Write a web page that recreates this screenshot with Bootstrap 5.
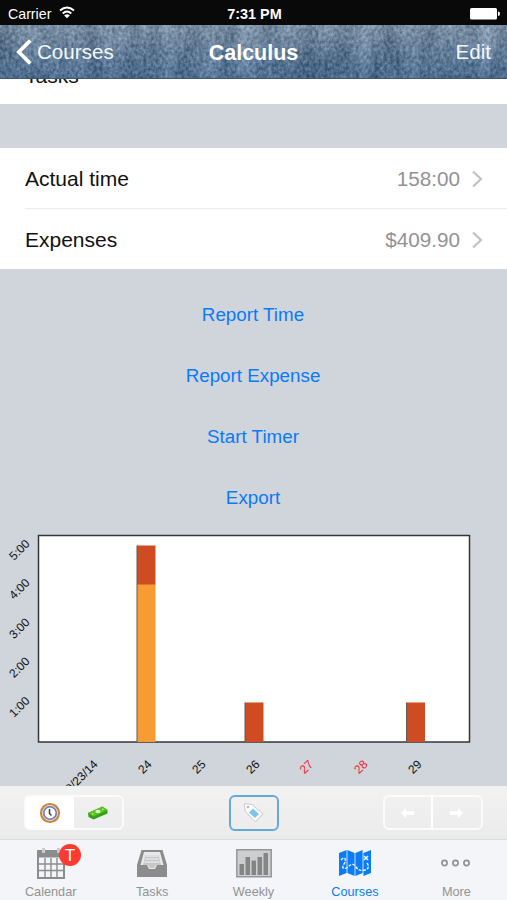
<!DOCTYPE html>
<html lang="en">
<head>
<meta charset="utf-8">
<meta name="viewport" content="width=device-width, initial-scale=1">
<title>Calculus</title>
<link href="https://cdn.jsdelivr.net/npm/bootstrap@5.3.0/dist/css/bootstrap.min.css" rel="stylesheet">
<style>
body{font-family:"Liberation Sans",Arial,sans-serif;background:#d0d4db;height:900px;overflow:hidden;color:#111}
svg{display:block;flex:none}
.status{height:25px;background:#090909;font-size:14.2px;line-height:28px;padding:0 6px 0 8px}
.status strong{font-size:14.4px}
.denim{height:54px;background:#56789b;overflow:hidden;isolation:isolate}
.denim-tex{inset:0;z-index:-1}
.denim .side{font-size:20.6px;flex:1 1 0;color:#f2f7fb;padding-top:1px}
.denim .title{font-size:21.5px;padding-top:2px}
.rows .list-group-item{height:61px;font-size:21px;padding:1px 24px 0 0;margin-left:25px;border-color:#ececee;background:transparent;color:#111}
.rows .list-group-item+.list-group-item{height:60px}
.rows .value{color:#929295;font-size:20.7px}
.tasks-row{height:25px;font-size:21px}
.tasks-row span{margin:-18px 0 0 25px;line-height:30px}
.gap-band{height:44px}
.actions .btn{height:61px;font-size:18.8px;color:#0a7af5;border:0;padding:0 1px 0 0}
.tools{height:54px;background:linear-gradient(#f2f2f2,#ebebeb);padding:0 24px 0 24px;border-bottom:1px solid #dadcde}
.seg{height:35px;border:2px solid #fbfbfb;border-radius:6px}
.seg>div{width:48px}
.tagbtn{width:50px;height:36px;border:2px solid #65a8da;border-radius:6px}
.tabs{height:60px;background:#f3f5f8}
.tabs a{color:#929292;font-size:12.7px;line-height:16px;padding-top:6px}
.tabs a.on{color:#0a7cf8}
.tab-badge{left:59px;top:4px;width:22px;height:22px;border-radius:50%;background:#fd3b30;font-size:17px;line-height:23px}
</style>
<script src="https://cdn.jsdelivr.net/npm/bootstrap@5.3.0/dist/js/bootstrap.bundle.min.js"></script>
</head>
<body class="d-flex flex-column">
<div class="status d-flex text-white flex-shrink-0">
  <div class="d-flex col px-0 align-items-start"><span>Carrier</span>
    <svg class="ms-2 mt-1" width="16" height="16" viewBox="0 0 16 16" fill="none" stroke="#fff" stroke-width="2"><path d="M1 6.600Q8 .4 15 6.600M3.700 9.400Q8 5.600 12.300 9.400"/><path d="M8 14.200 5.200 11.400Q8 9.200 10.800 11.400Z" fill="#fff" stroke="none"/></svg>
  </div>
  <strong>7:31 PM</strong>
  <div class="d-flex col justify-content-end px-0"><svg class="mt-2" width="31" height="12" viewBox="0 0 31 12" fill="#fff"><rect width="27" height="11.500" rx="1.500"/><path d="M28 3.500q2 0 2 2.200t-2 2.200z"/></svg></div>
</div>
<header class="denim position-relative d-flex align-items-center flex-shrink-0 text-white">
  <svg class="denim-tex position-absolute" width="507" height="54" color-interpolation-filters="sRGB">
    <defs>
      <linearGradient id="wash" x2="0" y2="1"><stop offset="0" stop-color="#7f9ab5"/><stop offset=".5" stop-color="#5a7fa5"/><stop offset="1" stop-color="#386494"/></linearGradient>
      <filter id="weave" x="0" y="0" width="100%" height="100%"><feTurbulence type="fractalNoise" baseFrequency=".32 .26" numOctaves="3" seed="4"/><feColorMatrix values="1.5 0 0 0 -.3  1.5 0 0 0 -.28  1.5 0 0 0 -.25  0 0 0 0 .24"/></filter>
      <filter id="fade" x="0" y="0" width="100%" height="100%"><feTurbulence type="fractalNoise" baseFrequency=".05 .015" numOctaves="2" seed="9"/><feColorMatrix values="1.6 0 0 0 -.35  1.6 0 0 0 -.3  1.6 0 0 0 -.25  0 0 0 0 .2"/></filter>
    </defs>
    <rect width="507" height="54" fill="url(#wash)"/><rect width="507" height="54" filter="url(#fade)"/><rect width="507" height="54" filter="url(#weave)"/><rect y="53" width="507" height="1" fill="#3c5874"/>
  </svg>
  <div class="side d-flex align-items-center ps-3"><svg width="17" height="26" viewBox="0 0 17 26" fill="none" stroke="#fff" stroke-width="3.800"><path d="M14.300 1.500 2.800 13l11.500 11.500"/></svg><span class="ps-1 ms-0">Courses</span></div>
  <strong class="title">Calculus</strong>
  <div class="side text-end pe-3">Edit</div>
</header>
<main class="flex-grow-1 overflow-hidden">
  <div class="tasks-row bg-white d-flex overflow-hidden"><span>Tasks</span></div>
  <div class="gap-band"></div>
  <div class="rows list-group list-group-flush bg-white">
    <div class="list-group-item d-flex align-items-center"><span>Actual time</span><span class="value ms-auto">158:00</span><svg class="ms-2" width="15" height="18" viewBox="-4 0 15 18" fill="none" stroke="#bebec3" stroke-width="2"><path d="m1 1.500 8 7.500-8 7.500"/></svg></div>
    <div class="list-group-item d-flex align-items-center"><span>Expenses</span><span class="value ms-auto">$409.90</span><svg class="ms-2" width="15" height="18" viewBox="-4 0 15 18" fill="none" stroke="#bebec3" stroke-width="2"><path d="m1 1.500 8 7.500-8 7.500"/></svg></div>
  </div>
  <div class="actions d-grid pt-3">
    <button class="btn">Report Time</button><button class="btn">Report Expense</button><button class="btn">Start Timer</button><button class="btn">Export</button>
  </div>
  <svg width="507" height="257" viewBox="0 529 507 257" font-size="12" text-anchor="end" fill="#111">
    <rect x="38.500" y="535.500" width="431" height="206.500" fill="#fff" stroke="#34373a" stroke-width="1.500"/>
    <path fill="#cf4b22" d="M137 545.500h18.500V585H137zM245 702.500h18.500V742H245zM406.500 702.500H425V742h-18.500z"/><path fill="#f79c33" d="M137 584.500h18.500V742H137z"/>
    <path stroke="#62594c" d="M137 545.500V742M245 702.500V742M406.500 702.500V742"/>
    <text transform="translate(30.500 544.500)rotate(-45)">5:00</text><text transform="translate(30.500 583.500)rotate(-45)">4:00</text><text transform="translate(30.500 623)rotate(-45)">3:00</text><text transform="translate(30.500 662)rotate(-45)">2:00</text><text transform="translate(30.500 701.500)rotate(-45)">1:00</text>
    <text transform="translate(98.500 765)rotate(-45)">10/23/14</text><text transform="translate(152.500 765)rotate(-45)">24</text><text transform="translate(206.500 765)rotate(-45)">25</text><text transform="translate(260.500 765)rotate(-45)">26</text>
    <g fill="#ee2431"><text transform="translate(314 765)rotate(-45)">27</text><text transform="translate(368.500 765)rotate(-45)">28</text></g><text transform="translate(422.500 765)rotate(-45)">29</text>
  </svg>
</main>
<div class="tools d-flex align-items-center flex-shrink-0">
  <div class="col px-0 d-flex"><div class="seg d-flex">
    <div class="bg-white d-flex align-items-center justify-content-center"><svg width="22" height="22" viewBox="0 0 22 22"><circle cx="11" cy="11" r="9" fill="#f4f0ee" stroke="#c98443" stroke-width="2.200"/><circle cx="11" cy="11" r="6.300" fill="#fff" stroke="#7484b5" stroke-width="1.800"/><path d="M10.500 7v4.500l2 2" fill="none" stroke="#444" stroke-width="1.600"/></svg></div>
    <div class="d-flex align-items-center justify-content-center"><svg width="22" height="16" viewBox="0 0 22 16"><path d="M1 8 15.500 1.500 20.500 5v3.500L6.500 14.500 1.500 12z" fill="#36a01c"/><path d="M1 8 15.500 1.500 20.500 5 6.500 11.500z" fill="#55c42a"/><ellipse cx="11" cy="6.500" rx="2.600" ry="1.800" fill="#e0f8c8"/><path d="m5 8.800 1.500.4M15 4.200l1.500.4" stroke="#cdea4a" stroke-width="1.600"/></svg></div>
  </div></div>
  <div class="tagbtn d-flex align-items-center justify-content-center"><svg width="22" height="22" viewBox="0 0 22 22"><path d="M1.500 1.500 9 2.500l11 9.500-7.500 8L2 9z" fill="#fdfdfd" stroke="#c9c9c9"/><circle cx="5" cy="5" r="1.300" fill="#bbb"/><path d="m10 6.500 6 5.500-4 4-6-5.500z" fill="#7cc4f2"/></svg></div>
  <div class="col px-0 d-flex justify-content-end"><div class="seg d-flex">
    <div class="d-flex align-items-center justify-content-center border-end border-2 border-white"><svg width="14" height="10" viewBox="0 0 14 10"><path d="M0 5 5 0v3h8v4H5v3z" fill="#fff"/></svg></div>
    <div class="d-flex align-items-center justify-content-center"><svg width="14" height="10" viewBox="0 0 14 10"><path d="M13 5 8 0v3H0v4h8v3z" fill="#fff"/></svg></div>
  </div></div>
</div>
<nav class="tabs nav nav-fill flex-nowrap flex-shrink-0">
  <a class="col d-flex flex-column align-items-center text-decoration-none position-relative" href="#"><svg width="32" height="38" viewBox="0 0 32 38"><path fill="#8c8c8c" d="M2 4h28v29H2z"/><path fill="#f3f5f8" d="M4 11.500h24V31H4z"/><path fill="none" stroke="#8c8c8c" stroke-width="1.400" d="M10 12v19M16 12v19M22 12v19M4 18h24M4 24.500h24"/><path stroke="#ccc" stroke-width="3" d="M8.500 2v5M23.500 2v5"/></svg><span>Calendar</span><span class="tab-badge position-absolute text-white text-center">T</span></a>
  <a class="col d-flex flex-column align-items-center text-decoration-none" href="#"><svg width="32" height="38" viewBox="0 0 32 38"><path fill="#8c8c8c" d="M5.500 4h21L31 19v12H1V19z"/><path fill="#e7e9eb" d="M8 6h16l3.500 13H21l-2 4h-6l-2-4H4.500z"/><path fill="#c6c7c8" d="m9.500 9-2.500 10h5l2 3h4l2-3h5l-2.500-10z"/><path stroke="#f3f5f8" d="M10 10h12M9.500 13h13M8.500 16h15"/></svg><span>Tasks</span></a>
  <a class="col d-flex flex-column align-items-center text-decoration-none" href="#"><svg width="36" height="38" viewBox="0 0 36 38"><path fill="#cdcecf" stroke="#969696" stroke-width="1.500" d="M.8 3.800h34.400v27H.8z"/><path fill="#858585" d="M3.500 18H8v11H3.500zM9.500 11H14v18H9.500zM15.500 14.500H20V29h-4.500zM21.500 11H26v18h-4.500zM27.500 7H32v22h-4.500z"/></svg><span>Weekly</span></a>
  <a class="on col d-flex flex-column align-items-center text-decoration-none" href="#"><svg width="34" height="38" viewBox="0 0 34 38"><path fill="#0a7cf8" d="M1 7l7.600-3v23L1 30zM9.400 4l7.200 3v23l-7.200-3zM17.400 7l7.200-3v23l-7.200 3zM25.400 7 33 4v23l-7.600 3z"/><path fill="none" stroke="#f3f5f8" stroke-width="1.400" stroke-dasharray="3 1.200" d="M3 14c4-5 6 0 3 4s0 6 4 3c4-4 6-3 8 0s5 4 9 3 4-4 2-7"/><path stroke="#f3f5f8" stroke-width="1.500" d="m26 10 4 4m0-4-4 4"/></svg><span>Courses</span></a>
  <a class="col d-flex flex-column align-items-center text-decoration-none" href="#"><svg width="32" height="38" viewBox="0 0 32 38" fill="none" stroke="#929292" stroke-width="1.700"><circle cx="4.500" cy="17" r="2.600"/><circle cx="15.500" cy="17" r="2.600"/><circle cx="26.500" cy="17" r="2.600"/></svg><span>More</span></a>
</nav>
</body>
</html>
